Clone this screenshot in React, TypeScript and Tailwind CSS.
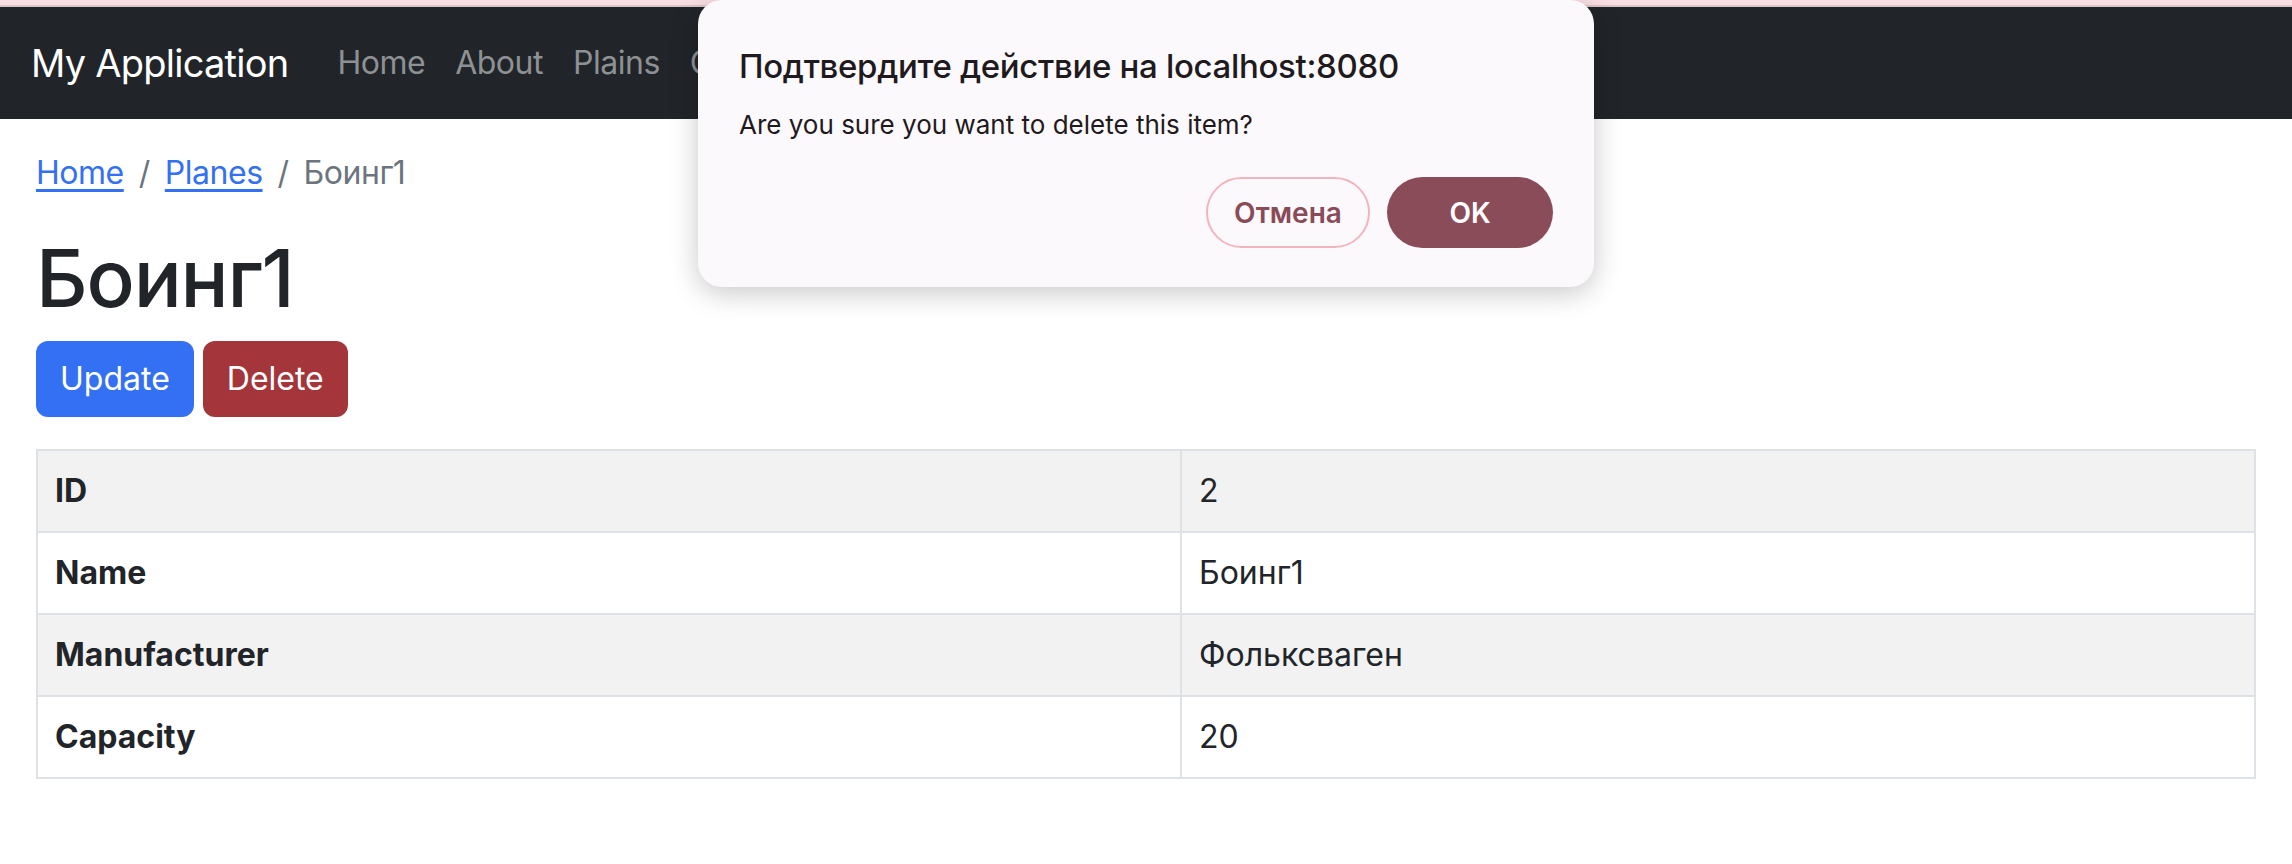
import React from "react";

const navLinks = ["Home", "About", "Plains", "Contact"];

const rows = [
    { label: "ID", value: "2" },
    { label: "Name", value: "Боинг1" },
    { label: "Manufacturer", value: "Фольксваген" },
    { label: "Capacity", value: "20" },
];

function ConfirmDialog() {
    return (
        <div className="absolute left-[698px] top-0 w-[896px] h-[287px] rounded-[24px] bg-[#fcf9fc] shadow-[0_6px_28px_rgba(0,0,0,0.22)] px-[41px] pt-[44px] text-[#1f1a1d]">
            <h2 className="text-[33px] leading-[44px] font-medium tracking-[-0.01em]">Подтвердите действие на localhost:8080</h2>
            <p className="text-[26px] leading-[36px] mt-[19px]">Are you sure you want to delete this item?</p>
            <div className="flex justify-end gap-[17px] mt-[34px]">
                <button className="w-[164px] h-[71px] rounded-full border-2 border-[#f2b5bf] text-[28px] font-semibold text-[#8a4a58]">
                    Отмена
                </button>
                <button className="w-[166px] h-[71px] rounded-full bg-[#8b4c5a] text-[28px] font-semibold text-white">
                    OK
                </button>
            </div>
        </div>
    );
}

export default function App() {
    return (
        <div className="relative min-h-[864px] bg-white font-['Inter','Liberation_Sans',sans-serif] text-[#212529]">
            <div className="h-[7px] bg-[#f9dfe3] border-b-2 border-[#dcc4c8]" />
            <nav className="h-[112px] bg-[#212529] flex items-center pl-[31px]">
                <span className="text-[38px] tracking-[-0.02em] text-white mr-[34px]">My Application</span>
                <ul className="flex">
                    {navLinks.map((link) => (
                        <li key={link} className="px-[15px] text-[32px] tracking-[-0.015em] text-[#8e9194]">
                            {link}
                        </li>
                    ))}
                </ul>
            </nav>

            <main className="px-[36px] pt-[30px]">
                <div className="flex items-center text-[32px] leading-[48px] tracking-[-0.015em]">
                    <a className="text-[#3470f3] underline underline-offset-[5px]">Home</a>
                    <span className="px-[15px] text-[#6c757d]">/</span>
                    <a className="text-[#3470f3] underline underline-offset-[5px]">Planes</a>
                    <span className="px-[15px] text-[#6c757d]">/</span>
                    <span className="text-[#6c757d]">Боинг1</span>
                </div>

                <h1 className="mt-[33px] text-[80px] leading-[96px] font-medium tracking-[-0.015em]">Боинг1</h1>

                <div className="flex gap-[9px] mt-[15px]">
                    <button className="h-[76px] px-[24px] rounded-[12px] bg-[#3470f3] text-white text-[32px]">Update</button>
                    <button className="h-[76px] px-[24px] rounded-[12px] bg-[#a3353b] text-white text-[32px]">Delete</button>
                </div>

                <table className="mt-[32px] w-[2220px] border-collapse border-2 border-[#dee2e6] text-[32px] leading-[48px]">
                    <tbody>
                        {rows.map((row, i) => (
                            <tr key={row.label} className={i % 2 === 0 ? "bg-[#f2f2f2]" : "bg-white"}>
                                <th className="w-[1144px] border-2 border-[#dee2e6] px-[17px] py-[16px] text-left font-bold">
                                    {row.label}
                                </th>
                                <td className="border-2 border-[#dee2e6] px-[17px] py-[16px]">{row.value}</td>
                            </tr>
                        ))}
                    </tbody>
                </table>
            </main>

            <ConfirmDialog />
        </div>
    );
}
